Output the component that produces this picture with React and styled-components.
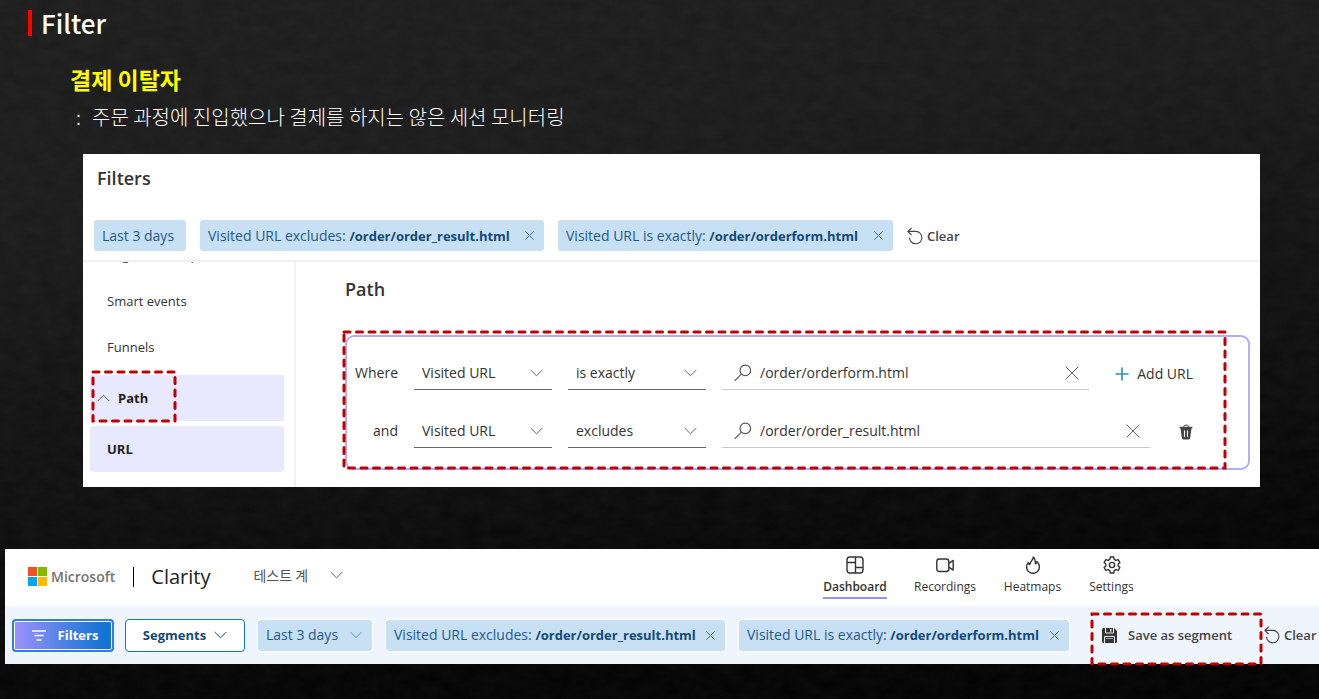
import React from 'react';
import styled, { createGlobalStyle, css } from 'styled-components';

const ui = "'Open Sans', 'Noto Sans', 'Noto Sans CJK KR', sans-serif";
const kr = "'Noto Sans CJK KR', 'Noto Sans', sans-serif";

const GlobalStyle = createGlobalStyle`
  *, *::before, *::after { box-sizing: border-box; }
  html { height: 100%; background: #050505; }
  body { margin: 0; font-family: ${ui}; font-size: 13px; line-height: 20px; color: #333; overflow-x: hidden; }
  h1, h2, h3, p, ul { margin: 0; padding: 0; }
  button, input, select { font: inherit; color: inherit; margin: 0; }
  button { background: none; border: 0; padding: 0; }
  svg { display: block; flex: none; }
`;

const Slide = styled.main`
  position: relative;
  isolation: isolate;
  min-height: 100vh;
  display: flex;
  flex-direction: column;
  background: linear-gradient(172deg, #1e1e1e 0%, #1c1c1c 25%, #101010 58%, #050505 82%, #030303 100%);
`;
const Texture = styled.svg`
  position: absolute;
  inset: 0;
  width: 100%;
  height: 100%;
  z-index: -1;
`;
const Intro = styled.header`
  display: flex;
  flex-direction: column;
  padding: 7px 28px 22px;
`;
const PageTitle = styled.h1`
  display: flex;
  align-items: center;
  gap: 9px;
  font-family: ${kr};
  font-size: 26px;
  line-height: 32px;
  font-weight: 500;
  color: #fff;
  &::before { content: ''; width: 4px; height: 26px; background: #f00; }
`;
const Topic = styled.h2`
  margin: 24px 0 0 42px;
  font-family: ${kr};
  font-size: 23px;
  line-height: 32px;
  font-weight: 700;
  color: #ff0;
`;
const Description = styled.p`
  display: flex;
  gap: 11px;
  margin: 7px 0 0 48px;
  font-family: ${kr};
  font-size: 20px;
  line-height: 30px;
  font-weight: 300;
  color: #fff;
`;

const FilterPanel = styled.section`
  margin: 0 59px 0 83px;
  background: #fff;
`;
const PanelHead = styled.header`
  padding: 12px 11px 9px;
  border-bottom: 2px solid #f1f1f1;
`;
const Heading = styled.h3`
  font-size: 18px;
  line-height: 24px;
  font-weight: 600;
  color: #333;
`;
const PanelTitle = styled(Heading)`
  padding-left: 3px;
`;
const ChipRow = styled.div`
  display: flex;
  align-items: center;
  gap: 14px;
  margin-top: 30px;
`;
const Chip = styled.button`
  flex: none;
  display: flex;
  align-items: center;
  justify-content: space-between;
  width: ${(p) => p.$width}px;
  height: 31px;
  padding: 0 10px 0 8px;
  border-radius: 3px;
  background: #c7e0f4;
  color: #1f5a8e;
  font-size: 14px;
  white-space: nowrap;
  box-shadow: 0 0 0 1px #fff;
  strong { font-size: 13px; font-weight: 700; color: #10497a; }
`;
const TextButton = styled.button`
  flex: none;
  display: flex;
  align-items: center;
  gap: ${(p) => p.$gap || 4}px;
  height: 31px;
  font-weight: ${(p) => p.$weight || 600};
  color: #444;
  white-space: nowrap;
`;

const PanelBody = styled.div`
  display: flex;
`;
const Sidebar = styled.nav`
  flex: none;
  width: 213px;
  border-right: 2px solid #f1f1f1;
  padding: 0 10px 15px 7px;
  overflow: hidden;
`;
const SideList = styled.ul`
  list-style: none;
  margin-top: -30px;
`;
const SideItem = styled.li`
  position: relative;
  ${(p) => p.$active && css`margin-top: 5px;`}
`;
const SideButton = styled.button`
  display: flex;
  align-items: center;
  gap: 8px;
  width: 100%;
  height: 46px;
  padding-left: ${(p) => (p.$open ? 7 : 17)}px;
  border-radius: ${(p) => (p.$open ? 0 : 4)}px;
  text-align: left;
  ${(p) => p.$active && css`background: #e8e8fe; font-weight: 700; color: #222;`}
`;
const PathArea = styled.div`
  flex: 1;
  min-width: 0;
  padding: 15px 10px 17px 49px;
`;
const RuleBox = styled.div`
  position: relative;
  display: flex;
  flex-direction: column;
  gap: 24px;
  margin-top: 34px;
  padding: 19px 55px 20px 0;
  border: 2px solid #b1aefc;
  border-radius: 9px;
`;
const Rule = styled.div`
  display: flex;
  align-items: center;
  gap: 16px;
`;
const RuleLabel = styled.span`
  flex: none;
  width: 51px;
  text-align: right;
  font-size: 14px;
`;
const SelectWrap = styled.label`
  position: relative;
  flex: none;
  width: 138px;
  svg { position: absolute; right: 9px; top: 13px; pointer-events: none; }
`;
const Select = styled.select`
  appearance: none;
  display: block;
  width: 100%;
  height: 34px;
  padding: 0 28px 0 8px;
  border: 0;
  border-bottom: 1px solid #666;
  border-radius: 0;
  background: none;
  font-size: 14px;
`;
const SearchField = styled.label`
  flex: 1;
  min-width: 0;
  display: flex;
  align-items: center;
  gap: 8px;
  height: 34px;
  padding: 0 10px 0 12px;
  border-bottom: 1px solid #c8c8c8;
`;
const SearchInput = styled.input`
  flex: 1;
  min-width: 0;
  height: 24px;
  padding: 0;
  border: 0;
  outline: 0;
  background: none;
  font-size: 14px;
`;
const RuleAction = styled.button`
  flex: none;
  display: flex;
  align-items: center;
  gap: 8px;
  margin-left: ${(p) => p.$space}px;
  padding-top: 2px;
  font-size: 14px;
  white-space: nowrap;
`;

const AppPanel = styled.section`
  margin: 62px 0 35px 5px;
  background: #fff;
`;
const AppHeader = styled.header`
  display: flex;
  align-items: center;
  height: 57px;
  padding: 0 184px 2px 23px;
`;
const Brand = styled.a`
  display: flex;
  align-items: center;
  gap: 4px;
  font-size: 14px;
  font-weight: 600;
  color: #737373;
  text-decoration: none;
`;
const Product = styled.span`
  margin-left: 18px;
  padding-left: 18px;
  position: relative;
  font-size: 20px;
  line-height: 20px;
  color: #222;
  &::before {
    content: '';
    position: absolute;
    left: 0;
    top: 0;
    width: 1px;
    height: 20px;
    background: #000;
  }
`;
const Project = styled.button`
  display: flex;
  align-items: center;
  gap: 22px;
  margin-left: 43px;
  padding-bottom: 4px;
  font-family: ${kr};
  font-size: 14px;
  color: #555;
`;
const Tabs = styled.nav`
  display: flex;
  gap: 26px;
  margin-left: auto;
  align-self: stretch;
`;
const Tab = styled.a`
  display: flex;
  flex-direction: column;
  align-items: center;
  width: ${(p) => p.$width}px;
  height: 49px;
  margin-top: 1px;
  padding-top: 6px;
  gap: 3px;
  font-size: 12px;
  color: #333;
  text-decoration: none;
  font-weight: ${(p) => (p.$active ? 600 : 400)};
  border-bottom: 2px solid ${(p) => (p.$active ? '#9b90fb' : 'transparent')};
`;
const Toolbar = styled.div`
  display: flex;
  align-items: center;
  height: 58px;
  padding-left: 7px;
  background: #eef5fc;
`;
const ToolbarChips = styled.div`
  display: flex;
  gap: 14px;
  margin-left: 13px;
`;
const FiltersButton = styled.button`
  flex: none;
  display: flex;
  align-items: center;
  justify-content: center;
  gap: 12px;
  width: 102px;
  height: 33px;
  padding-left: 4px;
  border: 2px solid #2e7fdf;
  border-radius: 4px;
  background: linear-gradient(90deg, #9b93fd, #1474d4 90%);
  box-shadow: inset 0 0 0 1px #fff;
  font-weight: 700;
  color: #fff;
`;
const SegmentsButton = styled.button`
  flex: none;
  display: flex;
  align-items: center;
  justify-content: center;
  gap: 8px;
  width: 120px;
  height: 33px;
  margin-left: 11px;
  border: 1px solid #1278cf;
  border-radius: 4px;
  background: #fff;
  font-weight: 700;
  color: #10497a;
`;
const SaveSlot = styled.div`
  position: relative;
  flex: none;
  width: 170px;
  margin-left: 23px;
  padding-left: 10px;
`;
const ClearSlot = styled.div`
  flex: none;
  margin-left: 2px;
`;

const Frame = styled.svg`
  position: absolute;
  left: ${(p) => p.$left}px;
  top: ${(p) => p.$top}px;
  width: calc(100% - ${(p) => p.$trim}px);
  height: calc(100% + ${(p) => p.$grow}px);
  overflow: visible;
  pointer-events: none;
`;

function Highlight({ left, top, trim, grow }) {
  return (
    <Frame $left={left} $top={top} $trim={trim} $grow={grow} aria-hidden="true">
      <rect width="100%" height="100%" fill="none" stroke="#c00000" strokeWidth="3" strokeDasharray="6 6.5" strokeLinecap="round" />
    </Frame>
  );
}

function Chevron({ up, color = '#666', size = 13 }) {
  return (
    <svg width={size} height="8" viewBox="0 0 13 8" fill="none" stroke={color} strokeWidth="1">
      <path d={up ? 'M.7 7 6.5 1.2 12.3 7' : 'M.7 1 6.5 6.8 12.3 1'} />
    </svg>
  );
}
function Cross({ size = 9, color = '#3c77a8' }) {
  return (
    <svg width={size} height={size} viewBox="0 0 14 14" fill="none" stroke={color} strokeWidth={14 / size}>
      <path d="M.6.6l12.8 12.8M13.4.6.6 13.4" />
    </svg>
  );
}
function Undo() {
  return (
    <svg width="16" height="18" viewBox="0 0 16 18" fill="none" stroke="#444" strokeWidth="1.1">
      <path d="M4.6 1 .9 4.4 4.6 8M1.2 4.4H9a6.2 6.2 0 1 1-6.5 6.3" />
    </svg>
  );
}
function Magnifier() {
  return (
    <svg width="18" height="18" viewBox="0 0 18 18" fill="none" stroke="#555" strokeWidth="1.2">
      <circle cx="11.3" cy="6.4" r="5.3" />
      <path d="M7.4 10.2.7 16.9" />
    </svg>
  );
}
function Plus() {
  return (
    <svg width="14" height="14" viewBox="0 0 14 14" stroke="#2b88d8" strokeWidth="1.6">
      <path d="M7 .5v13M.5 7h13" />
    </svg>
  );
}
function Trash() {
  return (
    <svg width="14" height="16" viewBox="0 0 14 16" fill="none">
      <path d="M.6 3.6h12.800" stroke="#444" strokeWidth="1.600" />
      <path d="M4.600 3C4.800 1.600 5.600 1.200 7 1.200s2.200.4 2.400 1.800" stroke="#444" strokeWidth="1" />
      <path d="M1.500 4h11l-1.300 9.800c-.2 1.200-.8 1.700-1.900 1.700H4.700c-1.100 0-1.700-.5-1.900-1.700z" fill="#444" />
      <path d="M5.500 6.500v6.500M8.500 6.500v6.500" stroke="#fff" strokeWidth="1.100" />
    </svg>
  );
}
function MicrosoftMark() {
  return (
    <svg width="19" height="19" viewBox="0 0 19 19">
      <path d="M0 0h9v9H0z" fill="#f25022" />
      <path d="M10 0h9v9h-9z" fill="#7fba00" />
      <path d="M0 10h9v9H0z" fill="#00a4ef" />
      <path d="M10 10h9v9h-9z" fill="#ffb900" />
    </svg>
  );
}
function FilterLines() {
  return (
    <svg width="14" height="11" viewBox="0 0 14 11" stroke="#fff" strokeWidth="1.500">
      <path d="M0 1h14M2.500 5.500h9M4.500 10h5" />
    </svg>
  );
}
function Disk() {
  return (
    <svg width="15" height="15" viewBox="0 0 15 15">
      <path d="M0 1.500C0 .6.6 0 1.500 0H12l3 3v10.500c0 .9-.6 1.500-1.500 1.500h-12C.6 15 0 14.400 0 13.500z" fill="#333" />
      <path d="M3.500 0v5h8V0M2.600 15V8.400h9.800V15" fill="none" stroke="#eef5fc" strokeWidth="1" />
      <path d="M8.800 1v2.800" stroke="#eef5fc" strokeWidth="1.300" />
      <path d="M4 10.500h7" stroke="#eef5fc" strokeWidth=".6" />
    </svg>
  );
}
const tabArt = {
  Dashboard: (
    <>
      <rect x="1" y="1" width="16" height="16" rx="3" />
      <path d="M9.500 1v16M1 6.500h8.500M9.500 11.500H17" />
    </>
  ),
  Recordings: (
    <>
      <rect x=".8" y="3" width="12" height="12.500" rx="2.500" />
      <path d="M12.800 7.300 17.200 4.400v9.700l-4.400-2.900" />
    </>
  ),
  Heatmaps: (
    <path d="M9.300 1C9.500 4.200 6 5 5.800 8.700 4.700 8.300 4.500 7.500 4.400 6.600 3 8 2.600 9.500 2.600 11.100c0 3.600 2.800 6.200 6.400 6.200s6.400-2.600 6.400-6.200c0-2.600-1-4.300-2.500-5.600-.1 1.300-.6 2-1.400 2.300C11.300 5.500 11.200 2.700 9.300 1z" />
  ),
  Settings: (
    <>
      <circle cx="9" cy="9" r="2.600" />
      <path d="M7.300 1h3.400l.5 2.300 1.700 1 2.300-.7 1.700 2.900-1.700 1.600v1.800l1.700 1.600-1.700 2.900-2.300-.7-1.700 1-.5 2.300H7.300l-.5-2.300-1.700-1-2.300.7-1.700-2.900 1.700-1.600V8.100L1.100 6.500l1.700-2.900 2.300.7 1.700-1z" />
    </>
  ),
};
function TabIcon({ name }) {
  return (
    <svg width="18" height="18" viewBox="0 0 18 18" fill="none" stroke="#333" strokeWidth="1.400" strokeLinejoin="round">
      {tabArt[name]}
    </svg>
  );
}

function RuleRow({ label, operator, url, children }) {
  return (
    <Rule>
      <RuleLabel>{label}</RuleLabel>
      <SelectWrap>
        <Select aria-label={`${label}: field`} defaultValue="Visited URL">
          <option>Visited URL</option>
        </Select>
        <Chevron />
      </SelectWrap>
      <SelectWrap>
        <Select aria-label={`${label}: operator`} defaultValue={operator}>
          <option>is exactly</option>
          <option>excludes</option>
        </Select>
        <Chevron />
      </SelectWrap>
      <SearchField>
        <Magnifier />
        <SearchInput aria-label={`${label}: URL`} defaultValue={url} />
        <button type="button" aria-label="Clear URL"><Cross size={14} color="#666" /></button>
      </SearchField>
      {children}
    </Rule>
  );
}

function UrlChip({ width, text, url }) {
  return (
    <Chip type="button" $width={width}>
      <span>{text} <strong>{url}</strong></span>
      <Cross />
    </Chip>
  );
}

const tabs = [
  { name: 'Dashboard', width: 64, active: true },
  { name: 'Recordings', width: 64 },
  { name: 'Heatmaps', width: 59 },
  { name: 'Settings', width: 47 },
];

export default function App() {
  return (
    <Slide>
      <GlobalStyle />
      <Texture aria-hidden="true">
        <filter id="grain" x="0" y="0" width="100%" height="100%">
          <feTurbulence type="fractalNoise" baseFrequency="0.05 0.08" numOctaves="5" seed="4" />
          <feColorMatrix values="0 0 0 0 1  0 0 0 0 1  0 0 0 0 1  0.045 0 0 0 -0.01" />
        </filter>
        <rect width="100%" height="100%" filter="url(#grain)" />
      </Texture>

      <Intro>
        <PageTitle>Filter</PageTitle>
        <Topic>결제 이탈자</Topic>
        <Description><span>:</span><span>주문 과정에 진입했으나 결제를 하지는 않은 세션 모니터링</span></Description>
      </Intro>

      <FilterPanel>
        <PanelHead>
          <PanelTitle>Filters</PanelTitle>
          <ChipRow>
            <Chip type="button" $width={92}>Last 3 days</Chip>
            <UrlChip width={344} text="Visited URL excludes:" url="/order/order_result.html" />
            <UrlChip width={335} text="Visited URL is exactly:" url="/order/orderform.html" />
            <TextButton type="button"><Undo />Clear</TextButton>
          </ChipRow>
        </PanelHead>
        <PanelBody>
          <Sidebar>
            <SideList>
              <SideItem><SideButton type="button">Page scroll depth</SideButton></SideItem>
              <SideItem><SideButton type="button">Smart events</SideButton></SideItem>
              <SideItem><SideButton type="button">Funnels</SideButton></SideItem>
              <SideItem $active>
                <SideButton type="button" $active $open><Chevron up />Path</SideButton>
                <Highlight left={3} top={-3} trim={112} grow={3} />
              </SideItem>
              <SideItem $active><SideButton type="button" $active>URL</SideButton></SideItem>
            </SideList>
          </Sidebar>
          <PathArea>
            <Heading>Path</Heading>
            <RuleBox>
              <RuleRow label="Where" operator="is exactly" url="/order/orderform.html">
                <RuleAction type="button" $space={10}><Plus />Add URL</RuleAction>
              </RuleRow>
              <RuleRow label="and" operator="excludes" url="/order/order_result.html">
                <RuleAction type="button" aria-label="Delete rule" $space={13}><Trash /></RuleAction>
              </RuleRow>
              <Highlight left={-3} top={-5} trim={20} grow={5} />
            </RuleBox>
          </PathArea>
        </PanelBody>
      </FilterPanel>

      <AppPanel>
        <AppHeader>
          <Brand href="#"><MicrosoftMark />Microsoft</Brand>
          <Product>Clarity</Product>
          <Project type="button">테스트 계<Chevron /></Project>
          <Tabs>
            {tabs.map((t) => (
              <Tab key={t.name} href="#" $width={t.width} $active={t.active}>
                <TabIcon name={t.name} />
                {t.name}
              </Tab>
            ))}
          </Tabs>
        </AppHeader>
        <Toolbar>
          <FiltersButton type="button"><FilterLines />Filters</FiltersButton>
          <SegmentsButton type="button">Segments<Chevron color="#10497a" /></SegmentsButton>
          <ToolbarChips>
            <Chip type="button" $width={114}>Last 3 days<Chevron color="#4a90cc" size={12} /></Chip>
            <UrlChip width={339} text="Visited URL excludes:" url="/order/order_result.html" />
            <UrlChip width={330} text="Visited URL is exactly:" url="/order/orderform.html" />
          </ToolbarChips>
          <SaveSlot>
            <TextButton type="button" $gap={11}><Disk />Save as segment</TextButton>
            <Highlight left={0} top={-6} trim={1} grow={19} />
          </SaveSlot>
          <ClearSlot>
            <TextButton type="button"><Undo />Clear</TextButton>
          </ClearSlot>
        </Toolbar>
      </AppPanel>
    </Slide>
  );
}
